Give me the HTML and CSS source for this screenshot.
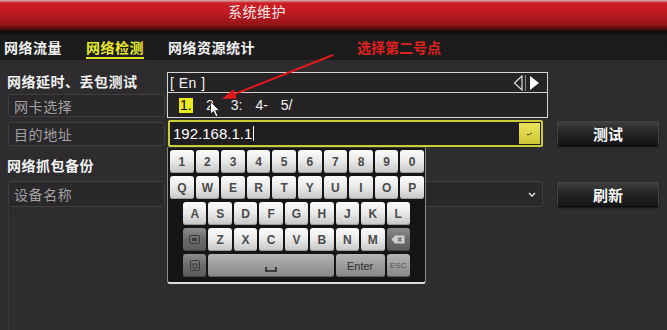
FILE: index.html
```html
<!DOCTYPE html>
<html lang="zh">
<head>
<meta charset="utf-8">
<title>系统维护</title>
<link rel="stylesheet" href="styles.css">
</head>
<body>
<div class="screen">
  <header class="titlebar"><span class="title">系统维护</span></header>
  <nav class="tabs">
    <span class="tab">网络流量</span>
    <span class="tab active">网络检测</span>
    <span class="tab">网络资源统计</span>
    <span class="note">选择第二号点</span>
  </nav>
  <main class="content">
    <div class="section-title">网络延时、丢包测试</div>
    <div class="row row-nic">
      <div class="label">网卡选择</div>
      <div class="field"></div>
    </div>
    <div class="row row-addr">
      <div class="label">目的地址</div>
      <div class="field input">
        <span class="value">192.168.1.1</span><span class="caret"></span>
        <span class="kbd-btn">-·</span>
      </div>
      <button class="btn">测试</button>
    </div>
    <div class="section-title sec2">网络抓包备份</div>
    <div class="row row-dev">
      <div class="label">设备名称</div>
      <div class="field select">
        <svg class="chev" width="8" height="5" viewBox="0 0 8 5"><path d="M1 1 L4 4 L7 1" fill="none" stroke="#e8e8e8" stroke-width="1.4"/></svg>
      </div>
      <button class="btn">刷新</button>
    </div>
    <div class="list"></div>
  </main>

  <div class="ime">
    <div class="ime-top">
      <span class="lang">[ En ]</span>
      <svg class="pager" width="30" height="16" viewBox="0 0 30 16">
        <path d="M9 1 L1.5 8 L9 15 Z" fill="none" stroke="#e0e0e0" stroke-width="1.2"/>
        <line x1="12.5" y1="0" x2="12.5" y2="16" stroke="#8a8a8a" stroke-width="1"/>
        <path d="M17 1 L26 8 L17 15 Z" fill="#ffffff"/>
      </svg>
    </div>
    <div class="ime-cands">
      <span class="cand sel">1.</span>
      <span class="cand">2.</span>
      <span class="cand">3:</span>
      <span class="cand">4-</span>
      <span class="cand">5/</span>
    </div>
  </div>

  <div class="keyboard">
    <div class="krow ten">
      <span class="key">1</span><span class="key">2</span><span class="key">3</span><span class="key">4</span><span class="key">5</span><span class="key">6</span><span class="key">7</span><span class="key">8</span><span class="key">9</span><span class="key">0</span>
    </div>
    <div class="krow ten">
      <span class="key">Q</span><span class="key">W</span><span class="key">E</span><span class="key">R</span><span class="key">T</span><span class="key">Y</span><span class="key">U</span><span class="key">I</span><span class="key">O</span><span class="key">P</span>
    </div>
    <div class="krow nine">
      <span class="key">A</span><span class="key">S</span><span class="key">D</span><span class="key">F</span><span class="key">G</span><span class="key">H</span><span class="key">J</span><span class="key">K</span><span class="key">L</span>
    </div>
    <div class="krow nine">
      <span class="key dark"><svg width="11" height="9" viewBox="0 0 11 9"><rect x="0.5" y="0.5" width="10" height="8" rx="1" fill="none" stroke="#3a3a3a"/><rect x="3" y="3" width="5" height="3" fill="#3a3a3a"/></svg></span>
      <span class="key">Z</span><span class="key">X</span><span class="key">C</span><span class="key">V</span><span class="key">B</span><span class="key">N</span><span class="key">M</span>
      <span class="key dark"><svg width="14" height="9" viewBox="0 0 14 9"><path d="M4 0.5 H13.5 V8.5 H4 L0.5 4.5 Z" fill="#d0d0d0"/><path d="M7 2.5 L10.5 6.5 M10.5 2.5 L7 6.5" stroke="#6a6a6a" stroke-width="1.2"/></svg></span>
    </div>
    <div class="krow nine">
      <span class="key dark"><svg width="10" height="11" viewBox="0 0 10 11"><rect x="0.5" y="0.5" width="9" height="10" rx="1" fill="none" stroke="#3a3a3a"/><rect x="3" y="4" width="4" height="4" fill="none" stroke="#3a3a3a"/></svg></span>
      <span class="key grey space"><svg width="12" height="5" viewBox="0 0 12 5"><path d="M1 0 V4 H11 V0" fill="none" stroke="#222" stroke-width="1.6"/></svg></span>
      <span class="key grey enter">Enter</span>
      <span class="key grey esc">ESC</span>
    </div>
  </div>

  <svg class="annot" width="667" height="330" viewBox="0 0 667 330">
    <line x1="333" y1="55" x2="235" y2="93.9" stroke="#e01818" stroke-width="2"/>
    <polygon points="222,99 236.8,98.5 233.2,89.2" fill="#e01818"/>
  </svg>
  <svg class="pointer" width="11" height="17" viewBox="0 0 11 17">
    <path d="M0.5 0.5 L0.5 13 L3.5 10.5 L6 16 L8 15 L5.6 9.6 L9.5 9.6 Z" fill="#ffffff" stroke="#111" stroke-width="0.8"/>
  </svg>
</div>
</body>
</html>
```

FILE: styles.css
```css
* { box-sizing: border-box; }

body {
  margin: 0;
  background: #2e2c2f;
  font-family: "Noto Sans CJK SC", "Liberation Sans", sans-serif;
}

.screen {
  position: relative;
  width: 667px;
  height: 330px;
  overflow: hidden;
  background: #2e2c2f;
}

.titlebar {
  height: 31px;
  padding-left: 228px;
  background: linear-gradient(#d9b4b4 0, #cc1e25 3px, #c01a20 13px, #921517 25px, #2a0808 31px);
}

.title {
  display: block;
  color: #f5e6e6;
  font-size: 14px;
  line-height: 23px;
  letter-spacing: 0.5px;
}

.tabs {
  height: 29px;
  display: flex;
  align-items: center;
  gap: 24px;
  padding-left: 4px;
  padding-top: 2px;
  background: linear-gradient(#0c0c0c, #1b1b1b 5px, #1c1c1c);
}

.tab {
  color: #f2f2f2;
  font-size: 14px;
  font-weight: 700;
  line-height: 20px;
  letter-spacing: 0.5px;
  padding-top: 2px;
  border-bottom: 2px solid transparent;
}

.tab.active {
  color: #eaea2c;
  border-bottom-color: #e4e42a;
}

.note {
  margin-left: 78px;
  color: #e2201c;
  font-size: 14px;
  font-weight: 700;
  line-height: 20px;
  padding-top: 2px;
  border-bottom: 2px solid transparent;
}

.content {
  padding: 12px 0 0 8px;
}

.section-title {
  margin-left: -1px;
  height: 18px;
  line-height: 18px;
  font-size: 14px;
  font-weight: 700;
  color: #f2f2f2;
  letter-spacing: 0.5px;
}

.sec2 { margin-top: 9px; }

.row {
  display: flex;
  align-items: center;
  gap: 3px;
}

.row-nic { margin-top: 4px; height: 23px; }
.row-addr { margin-top: 3px; height: 27px; }
.row-dev { margin-top: 7px; height: 26px; }

.label {
  width: 157px;
  height: 100%;
  display: flex;
  align-items: center;
  padding-left: 5px;
  background: #2a282a;
  border: 1px solid #403e40;
  border-radius: 3px;
  color: #a2a0a2;
  font-size: 14px;
  letter-spacing: 0.6px;
}

.row-addr .label { height: 24px; }

.field {
  width: 375px;
  height: 100%;
  background: #2a282a;
  border: 1px solid #403e40;
  border-radius: 3px;
}

.input {
  display: flex;
  align-items: center;
  padding-left: 3px;
  background: #1f1d20;
  border: 2px solid #cdcd3a;
  border-radius: 2px;
}

.value {
  color: #ffffff;
  font-family: "Liberation Sans", sans-serif;
  font-size: 15px;
}

.caret {
  width: 1px;
  height: 15px;
  margin-left: 1px;
  background: #ffffff;
}

.kbd-btn {
  margin-left: auto;
  margin-right: 1px;
  width: 21px;
  height: 21px;
  display: flex;
  align-items: center;
  justify-content: center;
  background: linear-gradient(#ece45a, #cfc634);
  color: #333;
  font-family: "Liberation Sans", sans-serif;
  font-size: 9px;
  font-weight: 700;
}

.select {
  display: flex;
  align-items: center;
  justify-content: flex-end;
  padding-right: 6px;
}

.btn {
  margin-left: 11px;
  width: 102px;
  height: 25px;
  padding: 0;
  border: 1px solid #444;
  border-bottom-color: #0c0c0c;
  border-radius: 2px;
  background: linear-gradient(#3e3e3e, #262626 45%, #141414);
  color: #ffffff;
  font-family: "Noto Sans CJK SC", sans-serif;
  font-size: 15px;
  font-weight: 700;
  text-shadow: 0 0 1px #000;
  box-shadow: 0 1px 2px rgba(0,0,0,0.6);
}

.list {
  margin-top: 3px;
  height: 120px;
  border-left: 1px solid #3b393b;
}

/* IME candidate popup */
.ime {
  position: absolute;
  left: 167px;
  top: 72px;
  width: 381px;
  height: 46px;
  background: #252326;
  border: 1px solid #d6d6d6;
  font-family: "Liberation Sans", sans-serif;
  color: #f4f4f4;
}

.ime-top {
  height: 20px;
  display: flex;
  align-items: center;
  justify-content: space-between;
  padding: 0 4px 0 2px;
  border-bottom: 1px solid #d0d0d0;
}

.lang {
  font-size: 14px;
  letter-spacing: 0.5px;
}

.ime-cands {
  height: 24px;
  display: flex;
  align-items: center;
  gap: 13px;
  padding-left: 11px;
}

.cand {
  font-size: 14px;
  line-height: 15px;
}

.cand.sel {
  width: 14px;
  padding-left: 1px;
  background: #ecec1c;
  color: #000;
}

/* on-screen keyboard */
.keyboard {
  position: absolute;
  left: 167px;
  top: 147px;
  width: 259px;
  height: 137px;
  padding: 2px 1px 0 2px;
  background: #151515;
  border: 1px solid #8a8a8a;
  border-top: 1px solid #3a3a3a;
  border-bottom: 2px solid #dcdcdc;
  border-radius: 0 0 3px 3px;
  display: flex;
  flex-direction: column;
  gap: 3px;
}

.krow {
  display: grid;
  gap: 2px;
  height: 23px;
}

.krow.ten { grid-template-columns: repeat(10, 1fr); }
.krow.nine {
  grid-template-columns: repeat(9, 1fr);
  padding: 0 14px 0 13px;
}

.key {
  display: flex;
  align-items: center;
  justify-content: center;
  border-radius: 3px;
  background: linear-gradient(#fbfbfb, #ebebeb 45%, #c6c6c6);
  box-shadow: inset 0 -1px 0 #9c9c9c;
  color: #4a4a4a;
  font-family: "Liberation Sans", sans-serif;
  font-size: 12px;
  font-weight: 700;
}

.key.dark {
  background: linear-gradient(#8c8c8c, #6c6c6c 50%, #5a5a5a);
  box-shadow: inset 0 -1px 0 #444;
}

.key.grey {
  background: linear-gradient(#b6b6b6, #9c9c9c 50%, #878787);
  box-shadow: inset 0 -1px 0 #5c5c5c;
  color: #2e2e2e;
}

.key.space {
  grid-column: span 5;
  align-items: flex-end;
  padding-bottom: 5px;
}

.key.enter {
  grid-column: span 2;
  font-weight: 400;
  font-size: 11px;
}

.key.esc {
  font-size: 8px;
  font-weight: 400;
  color: #555;
}

.annot {
  position: absolute;
  left: 0;
  top: 0;
  pointer-events: none;
}

.pointer {
  position: absolute;
  left: 210px;
  top: 101px;
}
```
